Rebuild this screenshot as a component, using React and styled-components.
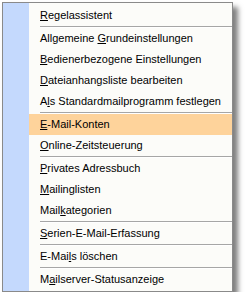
import React from "react";
import styled, { createGlobalStyle } from "styled-components";

const GlobalStyle = createGlobalStyle`
  body {
    margin: 0;
    background: #ffffff;
    font-family: "Liberation Sans", Arial, sans-serif;
  }
`;

const Page = styled.div`
  padding: 2px 0 0 2px;
`;

const Menu = styled.div`
  width: 229px;
  border: 1px solid #8a8a8a;
  background: linear-gradient(to right, #c4d9fd 0, #c4d9fd 26px, #fcfcf9 26px);
  box-shadow: 5px 5px 5px rgba(0, 0, 0, 0.5);
  padding: 2px 0 1px 0;
`;

const Item = styled.div`
  height: 21px;
  line-height: 21px;
  margin-left: 26px;
  padding-left: 11px;
  font-size: 11px;
  color: #000000;
  background: ${(p) => (p.$active ? "#fed39b" : "transparent")};
  white-space: pre;
`;

const Key = styled.span`
  text-decoration: underline;
`;

const Separator = styled.div`
  height: 1px;
  margin-left: 37px;
  background: #a6a6a6;
  border-bottom: 1px solid #ffffff;
`;

const entries = [
  { pre: "", key: "R", post: "egelassistent" },
  "sep",
  { pre: "Allgemeine ", key: "G", post: "rundeinstellungen" },
  { pre: "", key: "B", post: "edienerbezogene Einstellungen" },
  { pre: "", key: "D", post: "ateianhangsliste bearbeiten" },
  { pre: "A", key: "l", post: "s Standardmailprogramm festlegen" },
  "sep",
  { pre: "", key: "E", post: "-Mail-Konten", active: true },
  { pre: "", key: "O", post: "nline-Zeitsteuerung" },
  "sep",
  { pre: "", key: "P", post: "rivates Adressbuch" },
  { pre: "", key: "M", post: "ailinglisten" },
  { pre: "Mail", key: "k", post: "ategorien" },
  "sep",
  { pre: "", key: "S", post: "erien-E-Mail-Erfassung" },
  "sep",
  { pre: "E-Mai", key: "l", post: "s löschen" },
  "sep",
  { pre: "M", key: "a", post: "ilserver-Statusanzeige" },
];

export default function App() {
  return (
    <>
      <GlobalStyle />
      <Page>
        <Menu>
          {entries.map((e, i) =>
            e === "sep" ? (
              <Separator key={i} />
            ) : (
              <Item key={i} $active={e.active}>
                {e.pre}
                <Key>{e.key}</Key>
                {e.post}
              </Item>
            )
          )}
        </Menu>
      </Page>
    </>
  );
}
